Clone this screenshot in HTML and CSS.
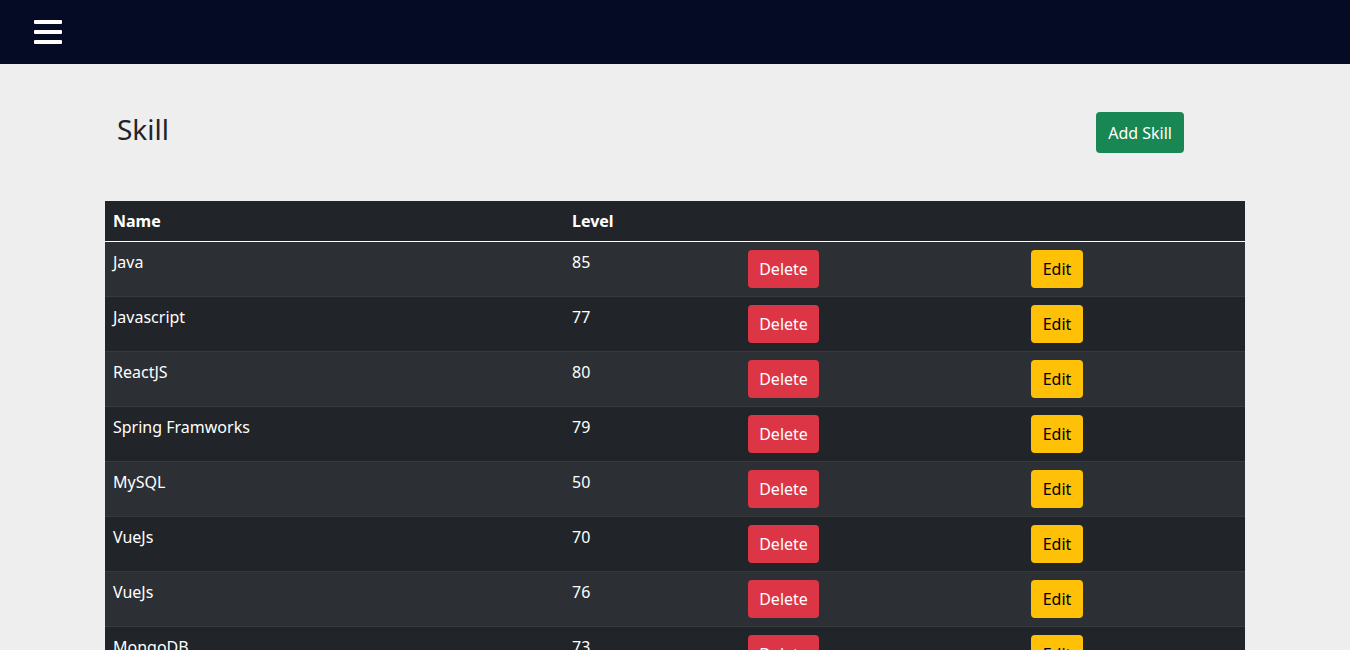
FILE: index.html
```html
<!DOCTYPE html>
<html lang="en">
<head>
<meta charset="utf-8">
<title>Skill</title>
<link rel="stylesheet" href="styles.css">
</head>
<body>
<nav class="topbar">
  <button class="menu-btn" aria-label="Menu">
    <span class="bar"></span><span class="bar"></span><span class="bar"></span>
  </button>
</nav>
<main class="page">
  <div class="page-head">
    <h3 class="title">Skill</h3>
    <button class="btn btn-success">Add Skill</button>
  </div>
  <table class="skills">
    <colgroup>
      <col class="c-name"><col class="c-level"><col class="c-del"><col class="c-edit">
    </colgroup>
    <thead>
      <tr><th>Name</th><th>Level</th><th></th><th></th></tr>
    </thead>
    <tbody>
      <tr><td>Java</td><td>85</td><td><button class="btn btn-danger">Delete</button></td><td><button class="btn btn-warning">Edit</button></td></tr>
      <tr><td>Javascript</td><td>77</td><td><button class="btn btn-danger">Delete</button></td><td><button class="btn btn-warning">Edit</button></td></tr>
      <tr><td>ReactJS</td><td>80</td><td><button class="btn btn-danger">Delete</button></td><td><button class="btn btn-warning">Edit</button></td></tr>
      <tr><td>Spring Framworks</td><td>79</td><td><button class="btn btn-danger">Delete</button></td><td><button class="btn btn-warning">Edit</button></td></tr>
      <tr><td>MySQL</td><td>50</td><td><button class="btn btn-danger">Delete</button></td><td><button class="btn btn-warning">Edit</button></td></tr>
      <tr><td>VueJs</td><td>70</td><td><button class="btn btn-danger">Delete</button></td><td><button class="btn btn-warning">Edit</button></td></tr>
      <tr><td>VueJs</td><td>76</td><td><button class="btn btn-danger">Delete</button></td><td><button class="btn btn-warning">Edit</button></td></tr>
      <tr><td>MongoDB</td><td>73</td><td><button class="btn btn-danger">Delete</button></td><td><button class="btn btn-warning">Edit</button></td></tr>
    </tbody>
  </table>
</main>
</body>
</html>
```

FILE: styles.css
```css
* { box-sizing: border-box; }
html, body { margin: 0; padding: 0; }
body {
  background: #eeeeee;
  font-family: "Noto Sans", "Open Sans", sans-serif;
  font-size: 16px;
  line-height: 24px;
  color: #212529;
}
.topbar {
  height: 64px;
  background: #050a25;
  display: flex;
  align-items: center;
  padding-left: 34px;
}
.menu-btn {
  background: none;
  border: 0;
  padding: 0;
  width: 28px;
  display: flex;
  flex-direction: column;
  gap: 6px;
  cursor: pointer;
}
.menu-btn .bar {
  display: block;
  height: 4px;
  width: 28px;
  background: #ffffff;
  border-radius: 1px;
}
.page {
  width: 1140px;
  margin: 0 auto;
  padding-top: 48px;
}
.page-head {
  display: flex;
  justify-content: space-between;
  align-items: flex-start;
  padding: 0 61px 0 12px;
  margin-bottom: 48px;
}
.title {
  margin: 0;
  font-size: 28px;
  font-weight: 400;
  line-height: 34px;
  color: #212529;
}
.btn {
  border: 0;
  border-radius: 4px;
  font-family: inherit;
  font-size: 16px;
  line-height: 24px;
  height: 38px;
  padding: 0 12px;
  cursor: pointer;
}
.btn-success { background: #198754; color: #fff; height: 41px; padding: 0 12px; }
.btn-danger { background: #dc3545; color: #fff; width: 71px; padding: 0; }
.btn-warning { background: #ffc107; color: #000; width: 52px; padding: 0; }
.skills {
  width: 1140px;
  border-collapse: collapse;
  background: #212529;
  color: #fff;
}
.c-name { width: 459px; }
.c-level { width: 176px; }
.c-del { width: 283px; }
.c-edit { width: 222px; }
.skills th, .skills td {
  text-align: left;
  vertical-align: top;
  padding: 8px;
}
.skills th {
  font-weight: 700;
  height: 40px;
  border-bottom: 1px solid #ffffff;
}
.skills tbody td {
  border-bottom: 1px solid #373b3e;
}
.skills tbody tr:nth-child(odd) { background: #2c3034; }
.skills tbody tr:nth-child(even) { background: #212529; }
```
